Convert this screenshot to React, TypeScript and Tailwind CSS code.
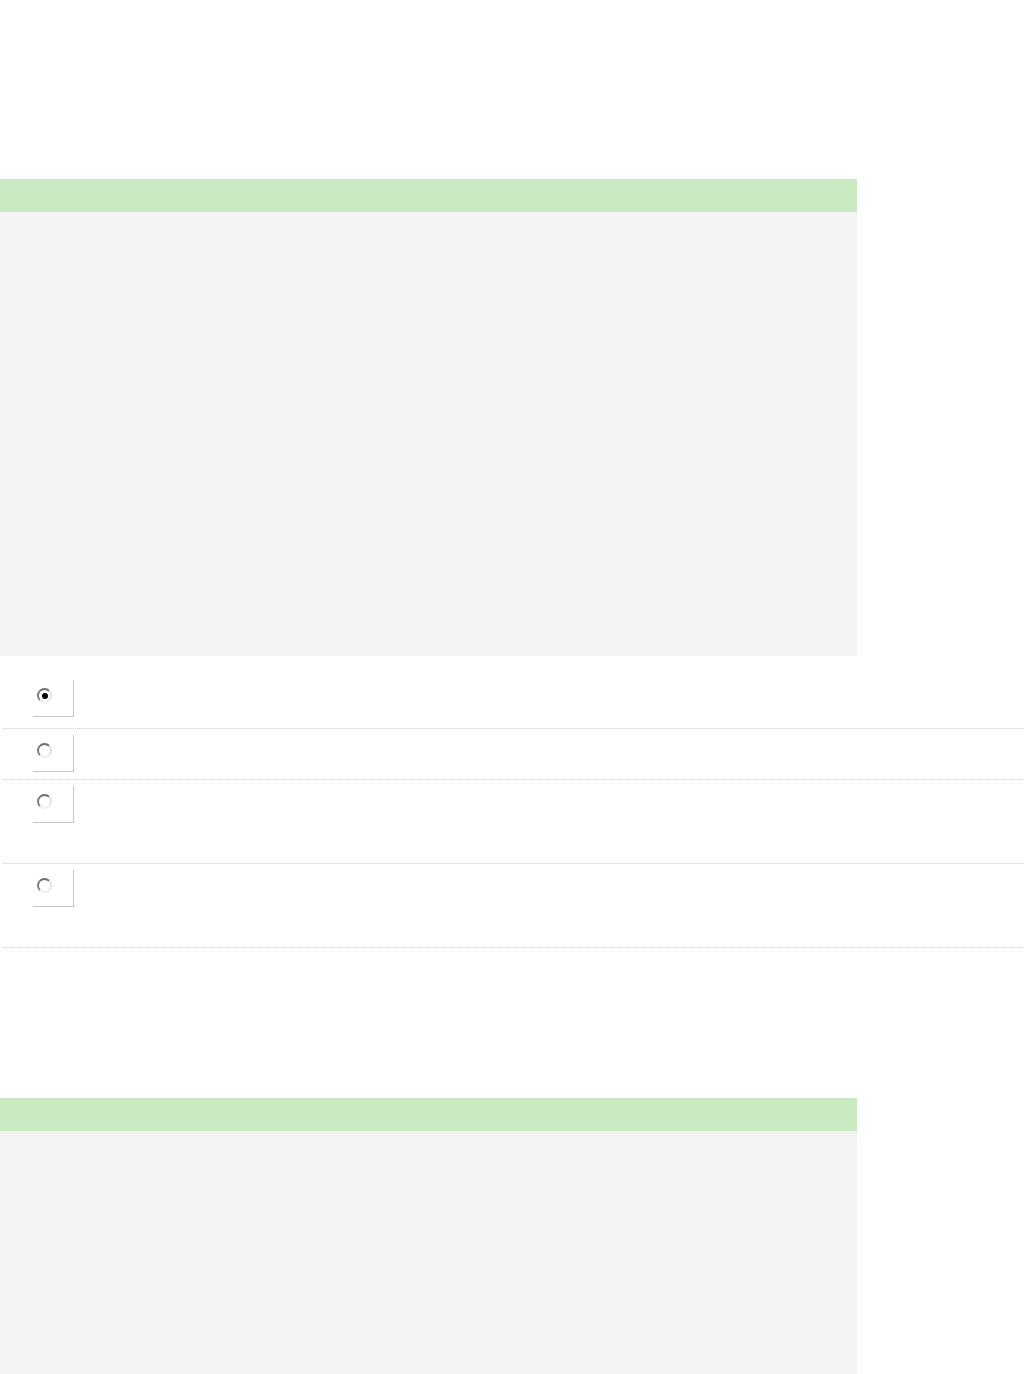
const options = [
  { id: 'a', checked: true, rowH: 'h-[55px]' },
  { id: 'b', checked: false, rowH: 'h-[51px]' },
  { id: 'c', checked: false, rowH: 'h-[84px]' },
  { id: 'd', checked: false, rowH: 'h-[84px]' },
];

function Radio({ checked }: { checked: boolean }) {
  return (
    <span className="w-[15px] h-[15px] rounded-full bg-white border-2 border-t-[#6f6f6f] border-l-[#7d7d7d] border-b-[#ededed] border-r-[#e2e2e2] flex items-center justify-center">
      {checked && <span className="w-[6px] h-[6px] rounded-full bg-black" />}
    </span>
  );
}

function Panel({ bodyH }: { bodyH: string }) {
  return (
    <div className="w-[857px]">
      <div className="h-[33px] bg-[#c9e9c1]" />
      <div className={`${bodyH} bg-[#f3f3f3]`} />
    </div>
  );
}

export default function App() {
  return (
    <div className="w-[1024px] bg-white font-['Liberation_Sans',sans-serif]">
      <div className="h-[179px]" />
      <Panel bodyH="h-[444px]" />

      {/* Answer options */}
      <div className="mt-[18px] ml-[3px]">
        {options.map(o => (
          <div
            key={o.id}
            className={`${o.rowH} border-b border-dotted border-[#cfcfcf] pt-[6px]`}
          >
            <div className="ml-[30px] w-[41px] h-[37px] border-r border-b border-[#c4c4c4] pl-[4px] pt-[8px]">
              <Radio checked={o.checked} />
            </div>
          </div>
        ))}
      </div>

      <div className="h-[150px]" />
      <Panel bodyH="h-[243px]" />
    </div>
  );
}
